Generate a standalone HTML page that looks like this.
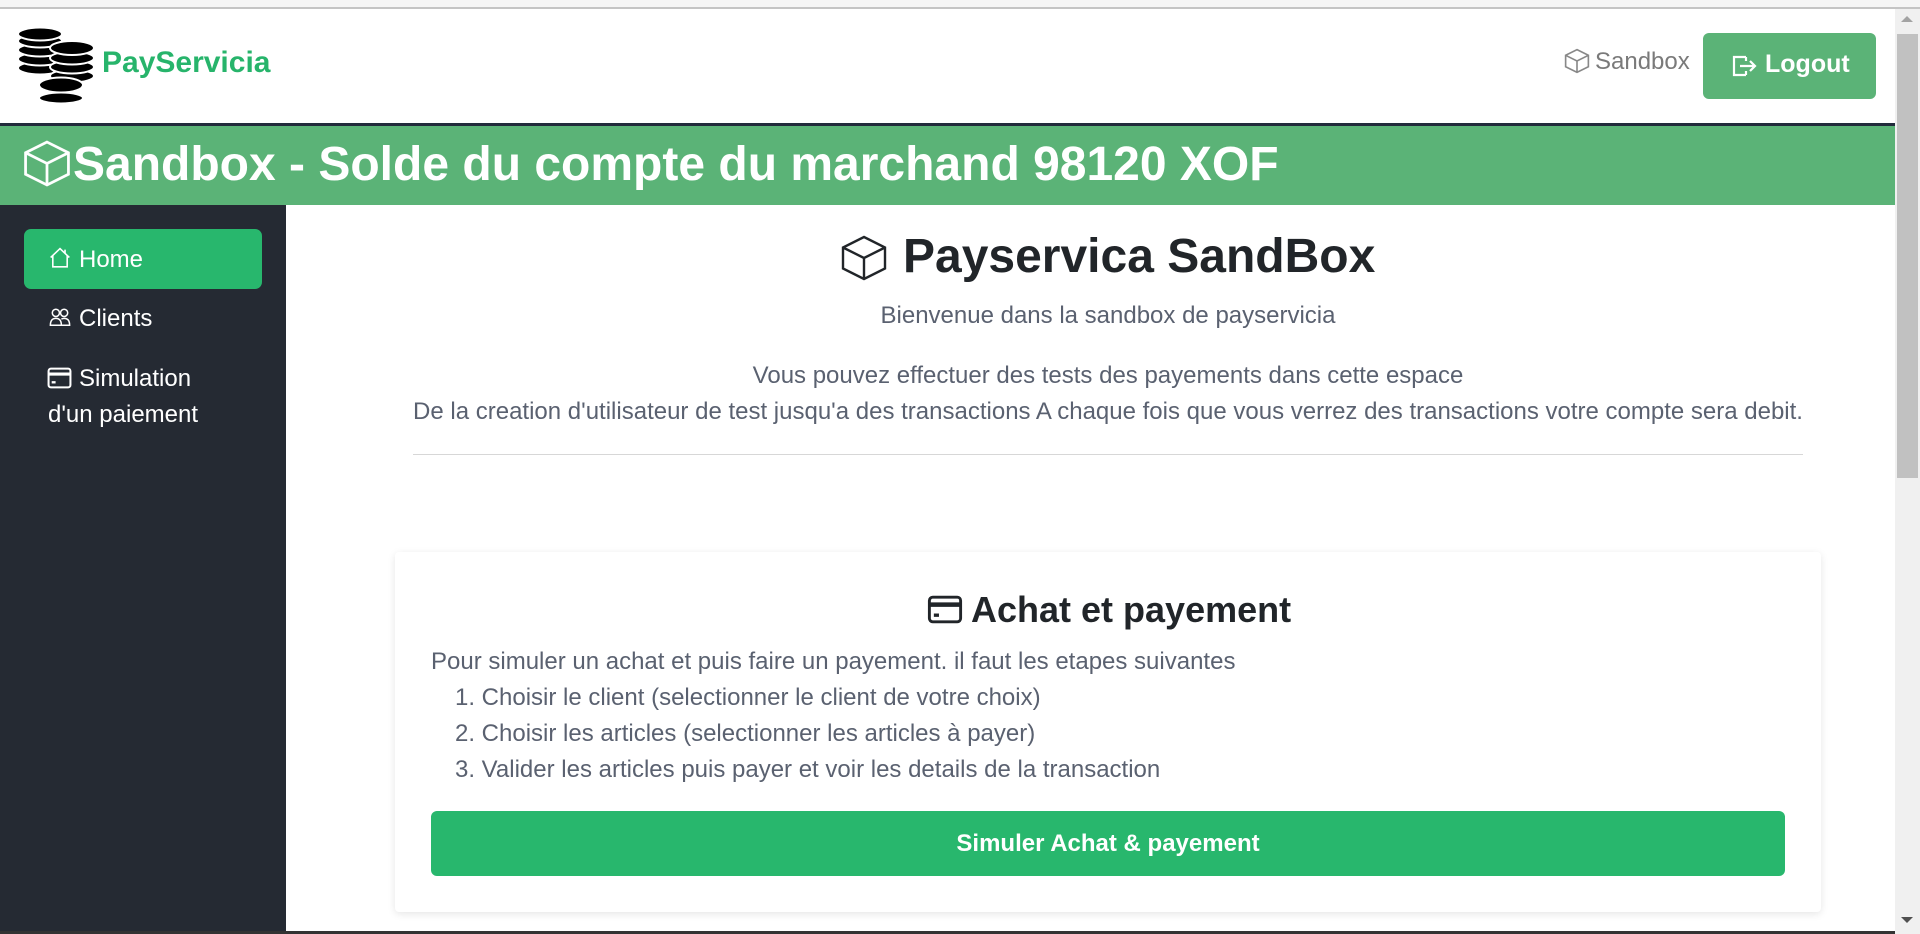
<!DOCTYPE html>
<html><head><meta charset="utf-8"><style>
*{margin:0;padding:0;box-sizing:border-box}
body{width:1920px;height:934px;overflow:hidden;background:#fff;font-family:"Liberation Sans",Arial,sans-serif;position:relative}
.a{position:absolute}
.top{left:0;top:0;width:1920px;height:9px;background:#f5f5f5;border-bottom:2px solid #c4c4c4}
.hdr{left:0;top:9px;width:1895px;height:114px;background:#fff}
.dl{left:0;top:123px;width:1895px;height:3px;background:#212b3b}
.band{left:0;top:126px;width:1895px;height:79px;background:#5bb377}
.side{left:0;top:205px;width:286px;height:729px;background:#252a33}
.sb{left:1895px;top:9px;width:25px;height:925px;background:#f0f0f0}
.thumb{left:1897px;top:34px;width:21px;height:444px;background:#c1c1c1}
.gt{color:#5a6170;font-size:24px;text-align:center}
</style></head><body>
<div class="a top"></div>
<div class="a hdr"></div>
<!-- logo -->
<svg class="a" style="left:17px;top:28px" width="78" height="76" viewBox="0 0 78 76">
<g fill="#000" stroke="#fff" stroke-width="2">
<ellipse cx="23" cy="40" rx="22" ry="6.5"/>
<ellipse cx="23" cy="31" rx="22" ry="6.5"/>
<ellipse cx="23" cy="22" rx="22" ry="6.5"/>
<ellipse cx="23" cy="13" rx="22" ry="6.5"/>
<ellipse cx="23" cy="6" rx="22" ry="6.5"/>
<ellipse cx="55" cy="48" rx="22" ry="6.5"/>
<ellipse cx="55" cy="39" rx="22" ry="6.5"/>
<ellipse cx="55" cy="30" rx="22" ry="6.5"/>
<ellipse cx="55" cy="20" rx="22" ry="7"/>
<ellipse cx="44" cy="70" rx="22" ry="5.5"/>
<ellipse cx="44" cy="57" rx="22" ry="7.5"/>
</g></svg>
<div class="a" style="left:102px;top:46px;font-size:30px;font-weight:bold;color:#27b46b">PayServicia</div>
<!-- sandbox link -->
<svg class="a" style="left:1564px;top:48px" width="26" height="26" viewBox="0 0 16 16" fill="none" stroke="#888" stroke-width="1"><path d="M8 1 L15 4.5 V11.5 L8 15 L1 11.5 V4.5Z M1 4.5 L8 8 L15 4.5 M8 8 V15"/></svg>
<div class="a" style="left:1595px;top:48px;font-size:24px;color:#7a7a7a">Sandbox</div>
<div class="a" style="left:1703px;top:33px;width:173px;height:66px;background:#5bb377;border-radius:6px"></div>
<svg class="a" style="left:1732px;top:54px" width="26" height="24" viewBox="0 0 26 24" fill="none" stroke="#fff" stroke-width="2.2"><path d="M14 3 H2 V21 H14 M14 3 V7 M14 21 V17 M8 12 H23 M18 7 L23 12 L18 17"/></svg>
<div class="a" style="left:1765px;top:50px;font-size:25px;font-weight:bold;color:#fff">Logout</div>
<div class="a dl"></div>
<div class="a band"></div>
<svg class="a" style="left:22px;top:139px" width="50" height="49" viewBox="0 0 16 16" fill="none" stroke="#fff" stroke-width="0.9"><path d="M8 1 L15 4.5 V11.5 L8 15 L1 11.5 V4.5Z M1 4.5 L8 8 L15 4.5 M8 8 V15"/></svg>
<div class="a" style="left:73px;top:137px;font-size:48px;font-weight:bold;color:#fff;white-space:nowrap">Sandbox - Solde du compte du marchand 98120 XOF</div>
<div class="a side"></div>
<div class="a" style="left:24px;top:229px;width:238px;height:60px;background:#28b76d;border-radius:7px"></div>
<svg class="a" style="left:48px;top:246px" width="24" height="23" viewBox="0 0 16 16" fill="none" stroke="#fff" stroke-width="1.1"><path d="M1.5 8 L8 1.8 L14.5 8 M3 6.7 V14.5 H13 V6.7 M11.5 2.5 V5"/></svg>
<div class="a" style="left:79px;top:246px;font-size:24px;color:#fff">Home</div>
<svg class="a" style="left:48px;top:306px" width="24" height="22" viewBox="0 0 16 16" fill="none" stroke="#fff" stroke-width="1.1"><circle cx="5" cy="5" r="2.6"/><circle cx="11" cy="5" r="2.6"/><path d="M1 14 q0-5 4-5 q4 0 4 5z M9 9.5 q1-.5 2-.5 q4 0 4 5 H9"/></svg>
<div class="a" style="left:79px;top:305px;font-size:24px;color:#fff">Clients</div>
<svg class="a" style="left:47px;top:367px" width="25" height="22" viewBox="0 0 16 14" fill="none" stroke="#fff" stroke-width="1.3"><rect x="1" y="1" width="14" height="12" rx="1.5"/><path d="M1 4.5 H15" stroke-width="2"/><rect x="3" y="9" width="2.5" height="1.5" fill="#fff" stroke="none"/></svg>
<div class="a" style="left:79px;top:361px;font-size:24px;color:#fff;line-height:36px;width:200px">Simulation<br><span style="margin-left:-31px">d'un paiement</span></div>
<!-- main -->
<svg class="a" style="left:840px;top:234px" width="48" height="48" viewBox="0 0 16 16" fill="none" stroke="#212529" stroke-width="0.8"><path d="M8 1 L15 4.5 V11.5 L8 15 L1 11.5 V4.5Z M1 4.5 L8 8 L15 4.5 M8 8 V15"/></svg>
<div class="a" style="left:903px;top:229px;font-size:48px;font-weight:bold;color:#212529;white-space:nowrap">Payservica SandBox</div>
<div class="a gt" style="left:313px;top:302px;width:1590px">Bienvenue dans la sandbox de payservicia</div>
<div class="a gt" style="left:313px;top:358px;width:1590px;line-height:36px">Vous pouvez effectuer des tests des payements dans cette espace<br>De la creation d'utilisateur de test jusqu'a des transactions A chaque fois que vous verrez des transactions votre compte sera debit.</div>
<div class="a" style="left:413px;top:454px;width:1390px;height:1px;background:#d7d7d7"></div>
<div class="a" style="left:395px;top:552px;width:1426px;height:360px;background:#fff;box-shadow:0 2px 8px rgba(0,0,0,.1);border-radius:4px"></div>
<svg class="a" style="left:927px;top:595px" width="36" height="29" viewBox="0 0 16 13" fill="none" stroke="#212529" stroke-width="1.3"><rect x="1" y="1" width="14" height="11" rx="1.5"/><path d="M1 4.3 H15" stroke-width="2"/><rect x="3" y="8.3" width="2.3" height="1.5" fill="#212529" stroke="none"/></svg>
<div class="a" style="left:971px;top:589px;font-size:36px;font-weight:bold;color:#212529;white-space:nowrap">Achat et payement</div>
<div class="a" style="left:431px;top:644px;font-size:24px;color:#5a6170;line-height:36px;white-space:nowrap">Pour simuler un achat et puis faire un payement. il faut les etapes suivantes
<div style="padding-left:24px">1. Choisir le client (selectionner le client de votre choix)<br>2. Choisir les articles (selectionner les articles à payer)<br>3. Valider les articles puis payer et voir les details de la transaction</div></div>
<div class="a" style="left:431px;top:811px;width:1354px;height:65px;background:#28b76d;border-radius:6px;color:#fff;font-weight:bold;font-size:24px;text-align:center;line-height:65px">Simuler Achat &amp; payement</div>
<div class="a" style="left:0;top:931px;width:1895px;height:3px;background:#333"></div>
<div class="a sb"></div>
<div class="a thumb"></div>
<div class="a" style="left:1901px;top:16px;width:0;height:0;border-left:6px solid transparent;border-right:6px solid transparent;border-bottom:6px solid #a3a3a3"></div>
<div class="a" style="left:1901px;top:917px;width:0;height:0;border-left:6px solid transparent;border-right:6px solid transparent;border-top:6px solid #505050"></div>
</body></html>
